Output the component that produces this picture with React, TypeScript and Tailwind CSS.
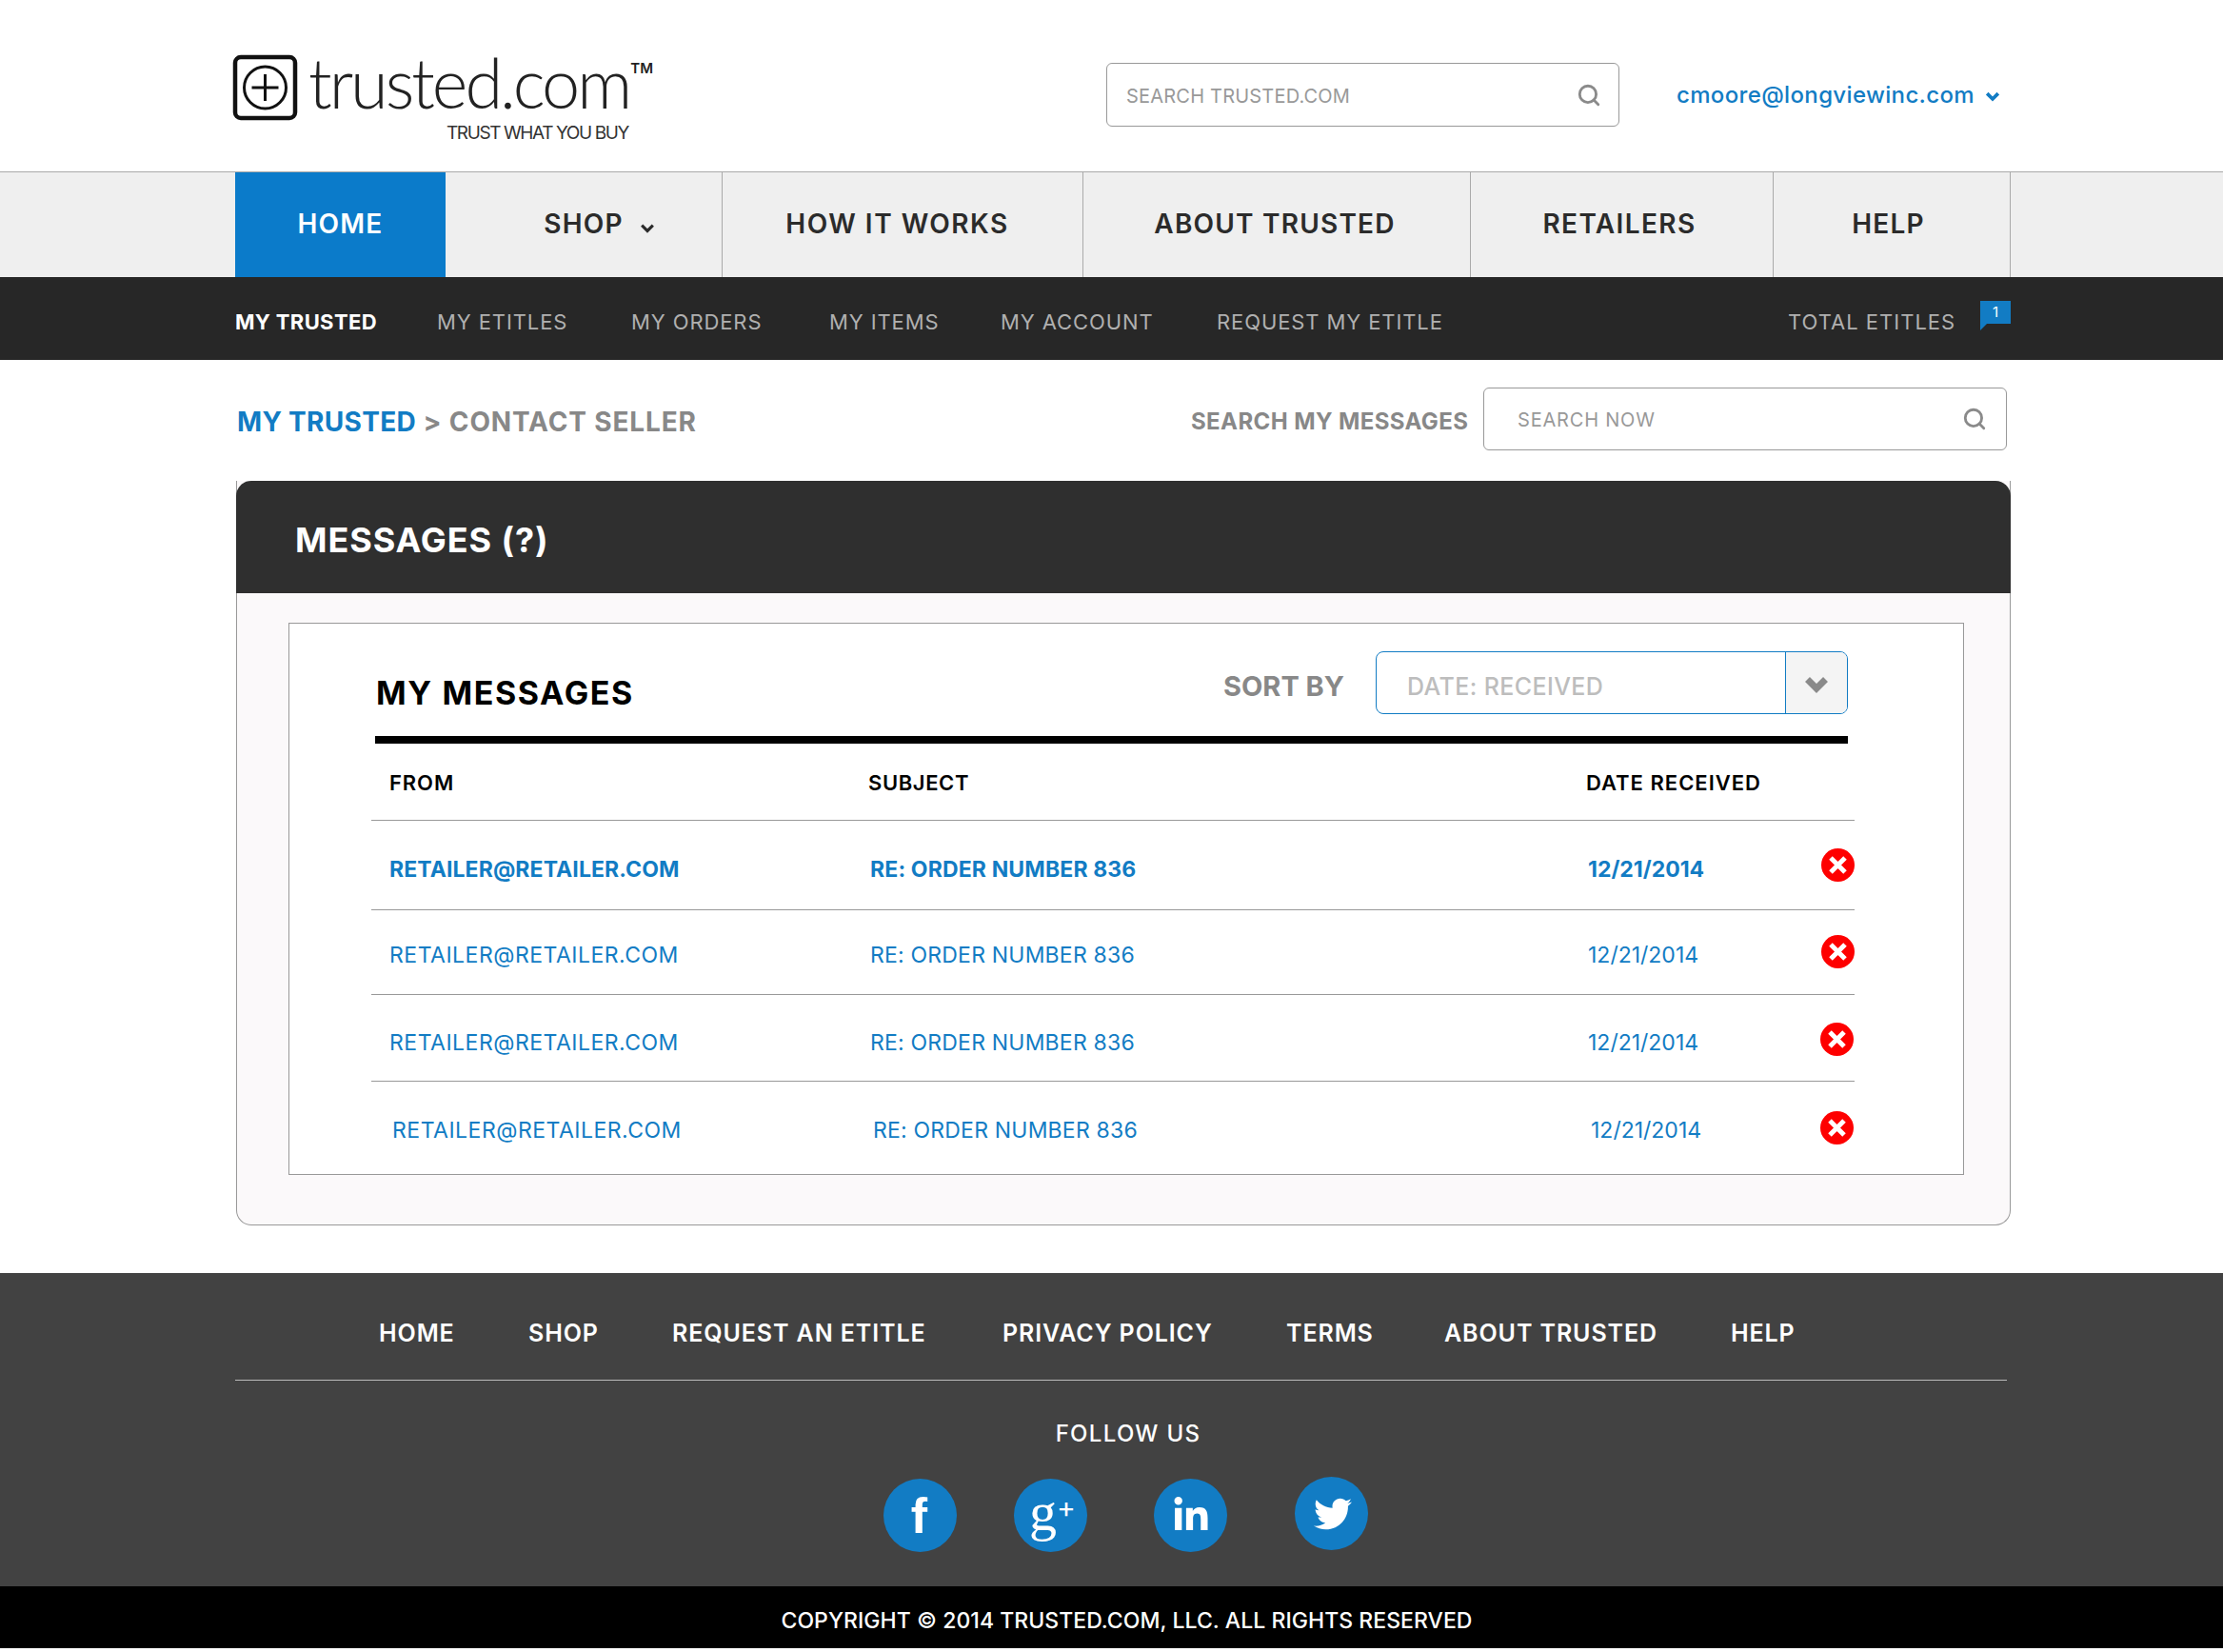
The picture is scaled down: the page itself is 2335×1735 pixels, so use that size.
import { Search } from "lucide-react";
import { FaLinkedinIn, FaTwitter } from "react-icons/fa";

const mainNav = [
  { label: "HOW IT WORKS", className: "w-[379px] pr-[11px] tracking-[1.5px]" },
  { label: "ABOUT TRUSTED", className: "w-[407px] pr-[4px]" },
  { label: "RETAILERS", className: "w-[318px] pr-[5px] tracking-[1.4px]" },
  { label: "HELP", className: "w-[249px] pr-[7px]" },
];

const subNav = [
  { label: "MY ETITLES", className: "w-[204px]" },
  { label: "MY ORDERS", className: "w-[208px]" },
  { label: "MY ITEMS", className: "w-[180px]" },
  { label: "MY ACCOUNT", className: "w-[227px]" },
  { label: "REQUEST MY ETITLE", className: "w-[300px]" },
];

const footerNav = [
  { label: "HOME", className: "w-[157px]" },
  { label: "SHOP", className: "w-[151px]" },
  { label: "REQUEST AN ETITLE", className: "w-[347px]" },
  { label: "PRIVACY POLICY", className: "w-[298px]" },
  { label: "TERMS", className: "w-[166px]" },
  { label: "ABOUT TRUSTED", className: "w-[301px]" },
  { label: "HELP", className: "" },
];

const rows = [
  { height: "h-[94px]", pad: "pl-[19px]", bold: true, textTop: "mt-[10px]", iconClass: "mt-0" },
  { height: "h-[89px]", pad: "pl-[19px]", bold: false, textTop: "mt-[6px]", iconClass: "mt-[-1px]" },
  { height: "h-[91px]", pad: "pl-[19px]", bold: false, textTop: "mt-[10px]", iconClass: "mt-[3px] -ml-[1px]" },
  { height: "h-[97px]", pad: "pl-[22px]", bold: false, textTop: "mt-[6px]", iconClass: "mt-[-1px] -ml-[4px]" },
];

function LogoMark() {
  return (
    <svg width="70" height="70" viewBox="0 0 70 70" fill="none" aria-hidden="true">
      <rect x="3" y="3" width="63" height="64" rx="6" stroke="#111" strokeWidth="4.5" />
      <circle cx="34.5" cy="35" r="22" stroke="#111" strokeWidth="3" />
      <path d="M34.5 21v28M20.5 35h28" stroke="#111" strokeWidth="3" />
    </svg>
  );
}

function ChevronIcon({ className = "", width, height, strokeWidth }: { className?: string; width: number; height: number; strokeWidth: number }) {
  return (
    <svg width={width} height={height} viewBox="0 0 26 18" fill="none" className={className} aria-hidden="true">
      <path d="M3.5 3.5L13 13l9.5-9.5" stroke="currentColor" strokeWidth={strokeWidth} />
    </svg>
  );
}

function DeleteIcon({ className = "" }: { className?: string }) {
  return (
    <svg width="35" height="35" viewBox="0 0 35 35" className={className} aria-hidden="true">
      <circle cx="17.5" cy="17.5" r="17.5" fill="#fe0000" />
      <path d="M10 10l15 15M25 10L10 25" stroke="#fff" strokeWidth="5" />
    </svg>
  );
}

function SocialCircle({ children, className = "" }: { children: React.ReactNode; className?: string }) {
  return (
    <div className={`flex h-[77px] w-[77px] items-center justify-center rounded-full bg-[#127cc4] text-white ${className}`}>
      {children}
    </div>
  );
}

export default function App() {
  return (
    <div className="bg-white font-['Inter','Liberation_Sans',sans-serif]">
      <header className="h-[180px] pl-[244px] pt-[50px]">
        <div className="flex items-start">
          <div className="flex w-[918px] items-start">
            <div className="mt-[7px]">
              <LogoMark />
            </div>
            <div className="ml-[10px] w-[355px]">
              <div className="flex items-start">
                <span className="font-['Lato',sans-serif] text-[72px] font-light leading-[72px] tracking-[-3px] text-[#222]">
                  trusted.com
                </span>
                <span className="ml-[1px] mt-[14px] text-[15px] font-semibold leading-none text-[#222]">TM</span>
              </div>
              <div className="ml-[145px] mt-[6px] text-[19px] leading-[24px] tracking-[-1.4px] text-[#333]">
                TRUST WHAT YOU BUY
              </div>
            </div>
          </div>
          <div className="mt-[16px] flex h-[67px] w-[539px] items-center justify-between rounded-[6px] border border-[#999] pl-[20px] pr-[18px]">
            <span className="mt-[2px] text-[20px] tracking-[0.2px] text-[#999]">SEARCH TRUSTED.COM</span>
            <Search size={26} strokeWidth={2.6} className="text-[#8a8a8a]" />
          </div>
          <div className="ml-[60px] mt-[36px] flex items-center">
            <span className="text-[24px] font-medium leading-[28px] tracking-[0.35px] text-[#127cc4]">cmoore@longviewinc.com</span>
            <ChevronIcon width={16} height={11} strokeWidth={6} className="ml-[11px] mt-[2px] text-[#127cc4]" />
          </div>
        </div>
      </header>

      <nav className="h-[111px] border-t border-[#aaa] bg-[#efefef] pl-[247px]">
        <div className="flex h-[110px] text-[28px] font-semibold tracking-[1.2px] text-[#2b2b2b]">
          <div className="flex w-[221px] items-center justify-center bg-[#0b7bca] pb-[2px] text-white">HOME</div>
          <div className="flex w-[291px] items-center justify-center border-r border-[#aaa] pb-[2px] pl-[33px]">
            SHOP
            <ChevronIcon width={16} height={12} strokeWidth={5} className="ml-[17px] mt-[9px]" />
          </div>
          {mainNav.map((item) => (
            <div key={item.label} className={`flex items-center justify-center border-r border-[#aaa] pb-[2px] ${item.className}`}>
              {item.label}
            </div>
          ))}
        </div>
      </nav>

      <div className="flex h-[87px] items-center bg-[#272727] pl-[247px] pt-[1px]">
        <span className="mt-[7px] w-[212px] text-[22px] font-bold tracking-[0.35px] text-white">MY TRUSTED</span>
        {subNav.map((item) => (
          <span key={item.label} className={`mt-[7px] text-[22px] tracking-[0.9px] text-[#b0b0b0] ${item.className}`}>
            {item.label}
          </span>
        ))}
        <span className="ml-[300px] mt-[7px] w-[202px] whitespace-nowrap text-[22px] tracking-[1px] text-[#b0b0b0]">TOTAL ETITLES</span>
        <div className="relative mb-[14px] flex h-[24px] w-[32px] items-center justify-center bg-[#127cc4] text-[15px] text-white">
          1
          <div className="absolute left-0 top-[24px] h-0 w-0 border-r-[7px] border-t-[7px] border-r-transparent border-t-[#127cc4]" />
        </div>
      </div>

      <div className="flex h-[127px] items-center pl-[249px]">
        <div className="mt-[2px] w-[1002px] text-[28px] font-bold tracking-[0.85px] text-[#888]">
          <span className="tracking-[0.3px] text-[#127cc4]">MY TRUSTED</span> &gt; CONTACT SELLER
        </div>
        <div className="mt-[2px] w-[307px] text-[24px] font-bold tracking-[0.4px] text-[#888]">SEARCH MY MESSAGES</div>
        <div className="mb-[3px] flex h-[66px] w-[550px] items-center justify-between rounded-[6px] border border-[#999] pl-[35px] pr-[20px]">
          <span className="mt-[2px] text-[20px] tracking-[0.8px] text-[#999]">SEARCH NOW</span>
          <Search size={26} strokeWidth={2.6} className="text-[#8a8a8a]" />
        </div>
      </div>

      <main className="ml-[248px] w-[1864px] rounded-b-[16px] border-x border-b border-[#999] bg-[#fbf9fa]">
        <div className="-mx-px flex h-[118px] items-center rounded-t-[16px] bg-[#2f2f2f] pl-[62px] pt-[5px] text-[36px] font-bold tracking-[0.9px] text-white">
          MESSAGES (?)
        </div>
        <div className="ml-[54px] mr-[48px] mt-[31px] h-[580px] border border-[#999] bg-white pl-[90px] pr-[121px]">
          <div className="flex h-[118px] items-start">
            <div className="mt-[53px] w-[891px] pl-[1px] text-[34px] font-bold leading-[40px] tracking-[1.6px] text-black">
              MY MESSAGES
            </div>
            <div className="mt-[46px] w-[160px] text-[29px] font-bold leading-[40px] text-[#888]">SORT BY</div>
            <div className="mt-[29px] flex h-[66px] w-[496px] overflow-hidden rounded-[8px] border border-[#127cc4]">
              <div className="flex flex-1 items-center pl-[32px] pt-[9px] text-[25px] font-medium tracking-[0.4px] text-[#bdbdbd]">DATE: RECEIVED</div>
              <div className="flex w-[65px] items-center justify-center border-l border-[#127cc4] bg-[#f4f4f4]">
                <ChevronIcon width={26} height={18} strokeWidth={7} className="mt-[3px] text-[#8a8a8a]" />
              </div>
            </div>
          </div>
          <div className="h-[8px] bg-black" />

          <div className="-ml-[4px] -mr-[7px]">
            <div className="grid h-[81px] grid-cols-[503px_754px_auto] items-center border-b border-[#999] pl-[19px] pt-[3px] text-[22px] font-semibold tracking-[0.9px] text-black">
              <span>FROM</span>
              <span className="tracking-[0.6px]">SUBJECT</span>
              <span className="tracking-[1px]">DATE RECEIVED</span>
            </div>
            {rows.map((row, index) => (
              <div
                key={index}
                className={`grid grid-cols-[505px_754px_245px_35px] items-center text-[23px] text-[#127cc4] ${row.height} ${row.pad} ${
                  index < rows.length - 1 ? "border-b border-[#999]" : ""
                } ${row.bold ? "font-bold" : "font-normal"}`}
              >
                <span className={`${row.textTop} ${row.bold ? "tracking-[0.1px]" : "tracking-[0.5px]"}`}>RETAILER@RETAILER.COM</span>
                <span className={`${row.textTop} ${row.bold ? "tracking-[0.15px]" : "tracking-[0.2px]"}`}>RE: ORDER NUMBER 836</span>
                <span className={row.textTop}>12/21/2014</span>
                <DeleteIcon className={row.iconClass} />
              </div>
            ))}
          </div>
        </div>
        <div className="h-[52px]" />
      </main>

      <footer className="mt-[50px] bg-[#424242] text-white">
        <div className="ml-[247px] w-[1861px]">
          <div className="flex h-[113px] items-center border-b border-[#bbb] pl-[151px] pt-[16px] text-[25px] font-semibold tracking-[0.9px]">
            {footerNav.map((item) => (
              <span key={item.label} className={item.className}>
                {item.label}
              </span>
            ))}
          </div>
        </div>
        <div className="h-[216px] pt-[41px]">
          <div className="ml-[1085px] w-[200px] whitespace-nowrap text-center text-[24px] font-medium leading-[30px] tracking-[1.3px]">
            FOLLOW US
          </div>
          <div className="ml-[928px] mt-[32px] flex items-start">
            <SocialCircle>
              <span className="mr-[2px] font-['Liberation_Sans',sans-serif] text-[52px] font-bold leading-none">f</span>
            </SocialCircle>
            <SocialCircle className="ml-[60px]">
              <span className="ml-[4px] mt-[-8px] font-['Liberation_Serif',serif] text-[58px] leading-none">g</span>
              <span className="mb-[18px] text-[30px] leading-none">+</span>
            </SocialCircle>
            <SocialCircle className="ml-[70px]">
              <FaLinkedinIn size={40} />
            </SocialCircle>
            <SocialCircle className="ml-[71px] mt-[-2px]">
              <FaTwitter size={40} className="ml-[3px]" />
            </SocialCircle>
          </div>
        </div>
      </footer>

      <div className="flex h-[65px] items-center justify-center bg-black pl-[32px] pt-[7px] text-[23px] font-medium tracking-[0.05px] text-white">
        COPYRIGHT © 2014 TRUSTED.COM, LLC. ALL RIGHTS RESERVED
      </div>
    </div>
  );
}
